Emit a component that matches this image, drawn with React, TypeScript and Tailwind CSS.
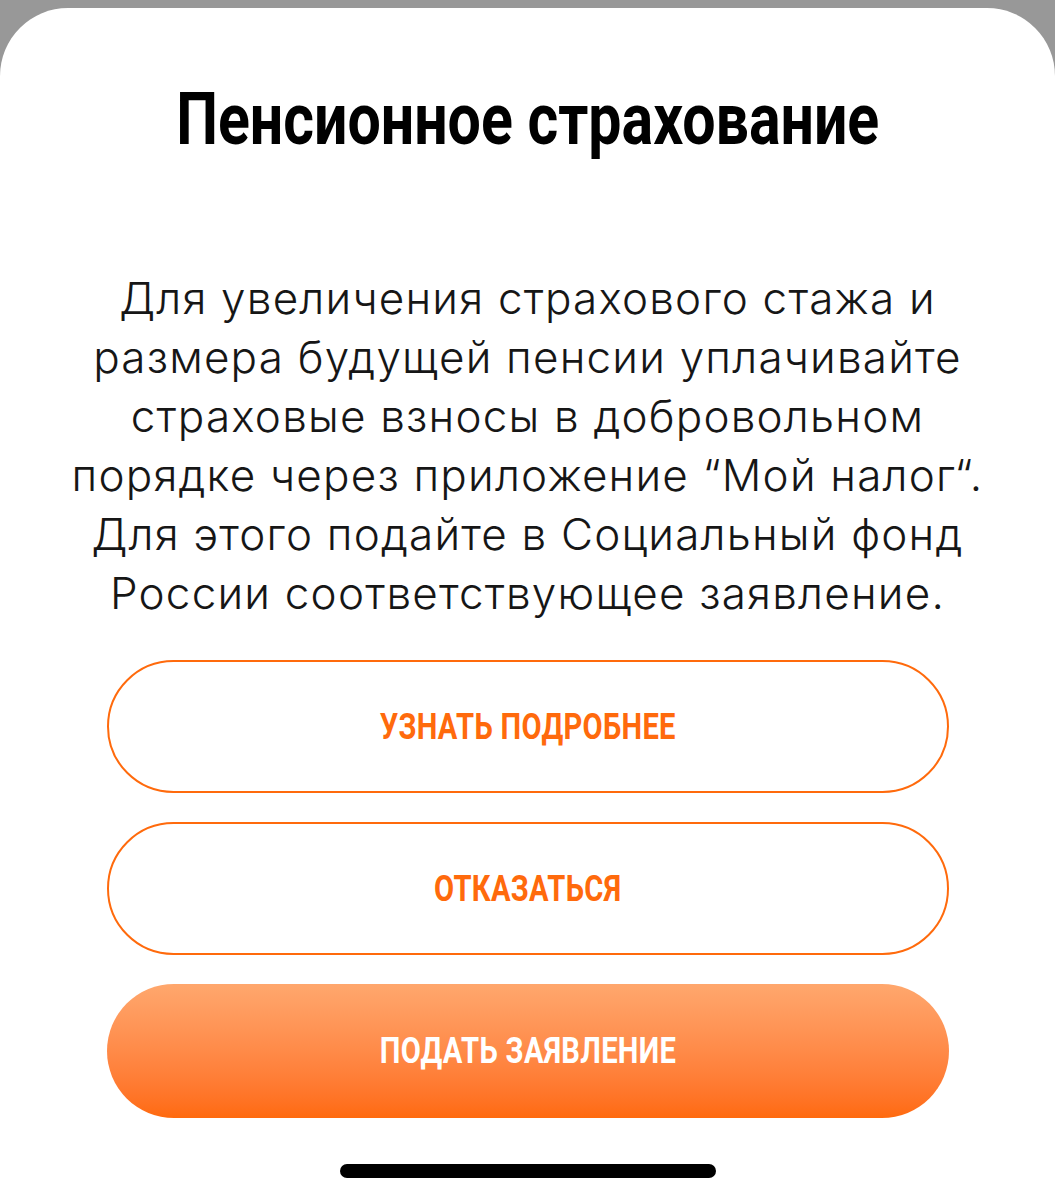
import React from "react";

const lines = [
  "Для увеличения страхового стажа и",
  "размера будущей пенсии уплачивайте",
  "страховые взносы в добровольном",
  "порядке через приложение “Мой налог“.",
  "Для этого подайте в Социальный фонд",
  "России соответствующее заявление.",
];

function PillButton({ label, filled }: { label: string; filled?: boolean }) {
  return (
    <button
      type="button"
      className={
        filled
          ? "flex h-[134px] w-full items-center justify-center rounded-full bg-gradient-to-b from-[#ffa76d] to-[#ff6a0c]"
          : "flex h-[133px] w-full items-center justify-center rounded-full border-2 border-[#ff6a0c] bg-white"
      }
    >
      <span
        className={
          "inline-block origin-center scale-x-[0.81] font-['Roboto',sans-serif] text-[36px] font-bold leading-none tracking-[0.01em] " +
          (filled ? "text-white" : "text-[#ff6a0c]")
        }
      >
        {label}
      </span>
    </button>
  );
}

export default function App() {
  return (
    <div className="min-h-[1200px] w-full bg-[#989898] pt-2">
      <div className="flex h-[1192px] flex-col items-center rounded-t-[68px] bg-white">
        {/* Title */}
        <h1 className="mt-[76px] whitespace-nowrap text-center font-['Roboto',sans-serif] text-[72px] font-bold leading-[72px] text-black">
          <span className="inline-block origin-center scale-x-[0.82]">
            Пенсионное страхование
          </span>
        </h1>

        {/* Body */}
        <p className="mt-[113px] text-center font-['Inter',sans-serif] text-[44px] font-light leading-[59px] tracking-[1.2px] text-[#161616]">
          {lines.map((l, i) => (
            <span key={i} className="block whitespace-nowrap">
              {l}
            </span>
          ))}
        </p>

        {/* Actions */}
        <div className="mt-[37px] flex w-[842px] flex-col gap-[29px]">
          <PillButton label="УЗНАТЬ ПОДРОБНЕЕ" />
          <PillButton label="ОТКАЗАТЬСЯ" />
          <PillButton label="ПОДАТЬ ЗАЯВЛЕНИЕ" filled />
        </div>

        {/* Home indicator */}
        <div className="mt-[46px] h-[14px] w-[376px] rounded-full bg-black" />
      </div>
    </div>
  );
}
